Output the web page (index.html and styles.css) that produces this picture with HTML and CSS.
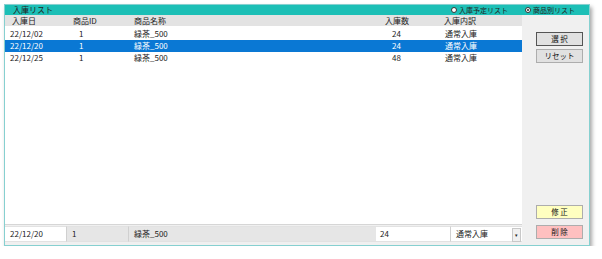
FILE: index.html
```html
<!DOCTYPE html>
<html lang="ja">
<head>
    <meta charset="UTF-8">
    <title>入庫リスト</title>
    <link rel="stylesheet" href="styles.css">
</head>
<body>
    <div class="window">
        <div class="titlebar">
            <span class="title">入庫リスト</span>
            <div class="radios">
                <label class="radio"><span class="dot"></span>入庫予定リスト</label>
                <label class="radio"><span class="dot on"></span>商品別リスト</label>
            </div>
        </div>
        <div class="content">
            <div class="main">
                <div class="list">
                    <div class="row head">
                        <span class="c1">入庫日</span>
                        <span class="c2">商品ID</span>
                        <span class="c3">商品名称</span>
                        <span class="c4">入庫数</span>
                        <span class="c5">入庫内訳</span>
                    </div>
                    <div class="row">
                        <span class="c1">22/12/02</span>
                        <span class="c2">1</span>
                        <span class="c3">緑茶_500</span>
                        <span class="c4">24</span>
                        <span class="c5">通常入庫</span>
                    </div>
                    <div class="row selected">
                        <span class="c1">22/12/20</span>
                        <span class="c2">1</span>
                        <span class="c3">緑茶_500</span>
                        <span class="c4">24</span>
                        <span class="c5">通常入庫</span>
                    </div>
                    <div class="row">
                        <span class="c1">22/12/25</span>
                        <span class="c2">1</span>
                        <span class="c3">緑茶_500</span>
                        <span class="c4">48</span>
                        <span class="c5">通常入庫</span>
                    </div>
                </div>
                <div class="inputs">
                    <span class="field w1">22/12/20</span>
                    <span class="field gray w2">1</span>
                    <span class="field gray w3">緑茶_500</span>
                    <span class="field w4">24</span>
                    <span class="field combo w5">通常入庫<span class="arrow">&#9662;</span></span>
                </div>
            </div>
            <div class="side">
                <button class="btn focus">選 択</button>
                <button class="btn">リセット</button>
                <div class="spacer"></div>
                <button class="btn edit">修 正</button>
                <button class="btn del">削 除</button>
            </div>
        </div>
    </div>
</body>
</html>
```

FILE: styles.css
```css
body {
    margin: 0;
    background: #fff;
    font-family: "Noto Sans CJK JP", "Noto Sans", sans-serif;
    font-size: 8px;
    color: #222;
}
.window {
    margin: 4px 0 0 4px;
    width: 584px;
    height: 240px;
    border: 1px solid #86d0d0;
    box-shadow: 2px 3px 4px rgba(0, 0, 0, 0.35);
    display: flex;
    flex-direction: column;
    background: #f0f0f0;
}
.titlebar {
    height: 10px;
    background: #1cbfb6;
    display: flex;
    justify-content: space-between;
    align-items: center;
    line-height: 10px;
}
.title {
    padding-left: 8px;
}
.radios {
    display: flex;
    gap: 17px;
    padding-right: 14px;
    font-size: 7px;
}
.radio {
    display: flex;
    align-items: center;
    gap: 2px;
}
.dot {
    width: 4px;
    height: 4px;
    border: 1px solid #333;
    border-radius: 50%;
    background: #fff;
    position: relative;
}
.dot.on::after {
    content: "";
    position: absolute;
    left: 1px;
    top: 1px;
    width: 2px;
    height: 2px;
    border-radius: 50%;
    background: #222;
}
.content {
    flex: 1;
    display: flex;
}
.main {
    width: 517px;
    display: flex;
    flex-direction: column;
}
.list {
    flex: 1;
    background: #fff;
    border-bottom: 1px solid #d6d6d6;
}
.row {
    display: grid;
    grid-template-columns: 61px 62px 248px 64px 82px;
    height: 12px;
    line-height: 12px;
}
.row.head {
    height: 11px;
    line-height: 11px;
    background: #e3e3e3;
    margin-bottom: 2px;
}
.row.selected {
    background: #0a78d4;
    color: #fff;
}
.row .c1 { padding-left: 5px; }
.row .c2 { padding-left: 13px; }
.row .c3 { padding-left: 6px; }
.row .c4 { padding-left: 16px; }
.row .c5 { padding-left: 5px; }
.head .c1 { padding-left: 7px; }
.head .c2 { padding-left: 7px; }
.head .c4 { padding-left: 9px; }
.head .c5 { padding-left: 4px; }
.inputs {
    display: flex;
    height: 16px;
    margin: 1px 0 3px;
}
.field {
    background: #fff;
    border-top: 1px solid #e2e2e2;
    border-bottom: 1px solid #e2e2e2;
    line-height: 14px;
    padding-left: 5px;
    box-sizing: border-box;
}
.field.gray {
    background: #e6e6e6;
    border-left: 1px solid #d0d0d0;
}
.w1 { width: 61px; }
.w2 { width: 62px; }
.w3 { width: 248px; }
.w4 { width: 74px; padding-left: 4px; }
.w5 { width: 72px; border-left: 1px solid #d0d0d0; }
.combo {
    position: relative;
}
.arrow {
    position: absolute;
    right: 1px;
    top: 1px;
    width: 7px;
    height: 12px;
    background: #f0f0f0;
    border: 1px solid #c8c8c8;
    font-size: 5px;
    line-height: 12px;
    text-align: center;
}
.side {
    flex: 1;
    display: flex;
    flex-direction: column;
    align-items: flex-start;
    padding: 17px 0 3px 14px;
}
.btn {
    width: 47px;
    height: 14px;
    margin-bottom: 3px;
    padding: 0;
    border: 1px solid #adadad;
    background: #e1e1e1;
    font-family: inherit;
    font-size: 7.5px;
    color: #111;
    line-height: 12px;
}
.btn.focus {
    border-color: #555;
}
.spacer {
    flex: 1;
}
.btn.edit {
    background: #ffffc0;
    margin-bottom: 6px;
}
.btn.del {
    background: #ffc0c0;
}
```
